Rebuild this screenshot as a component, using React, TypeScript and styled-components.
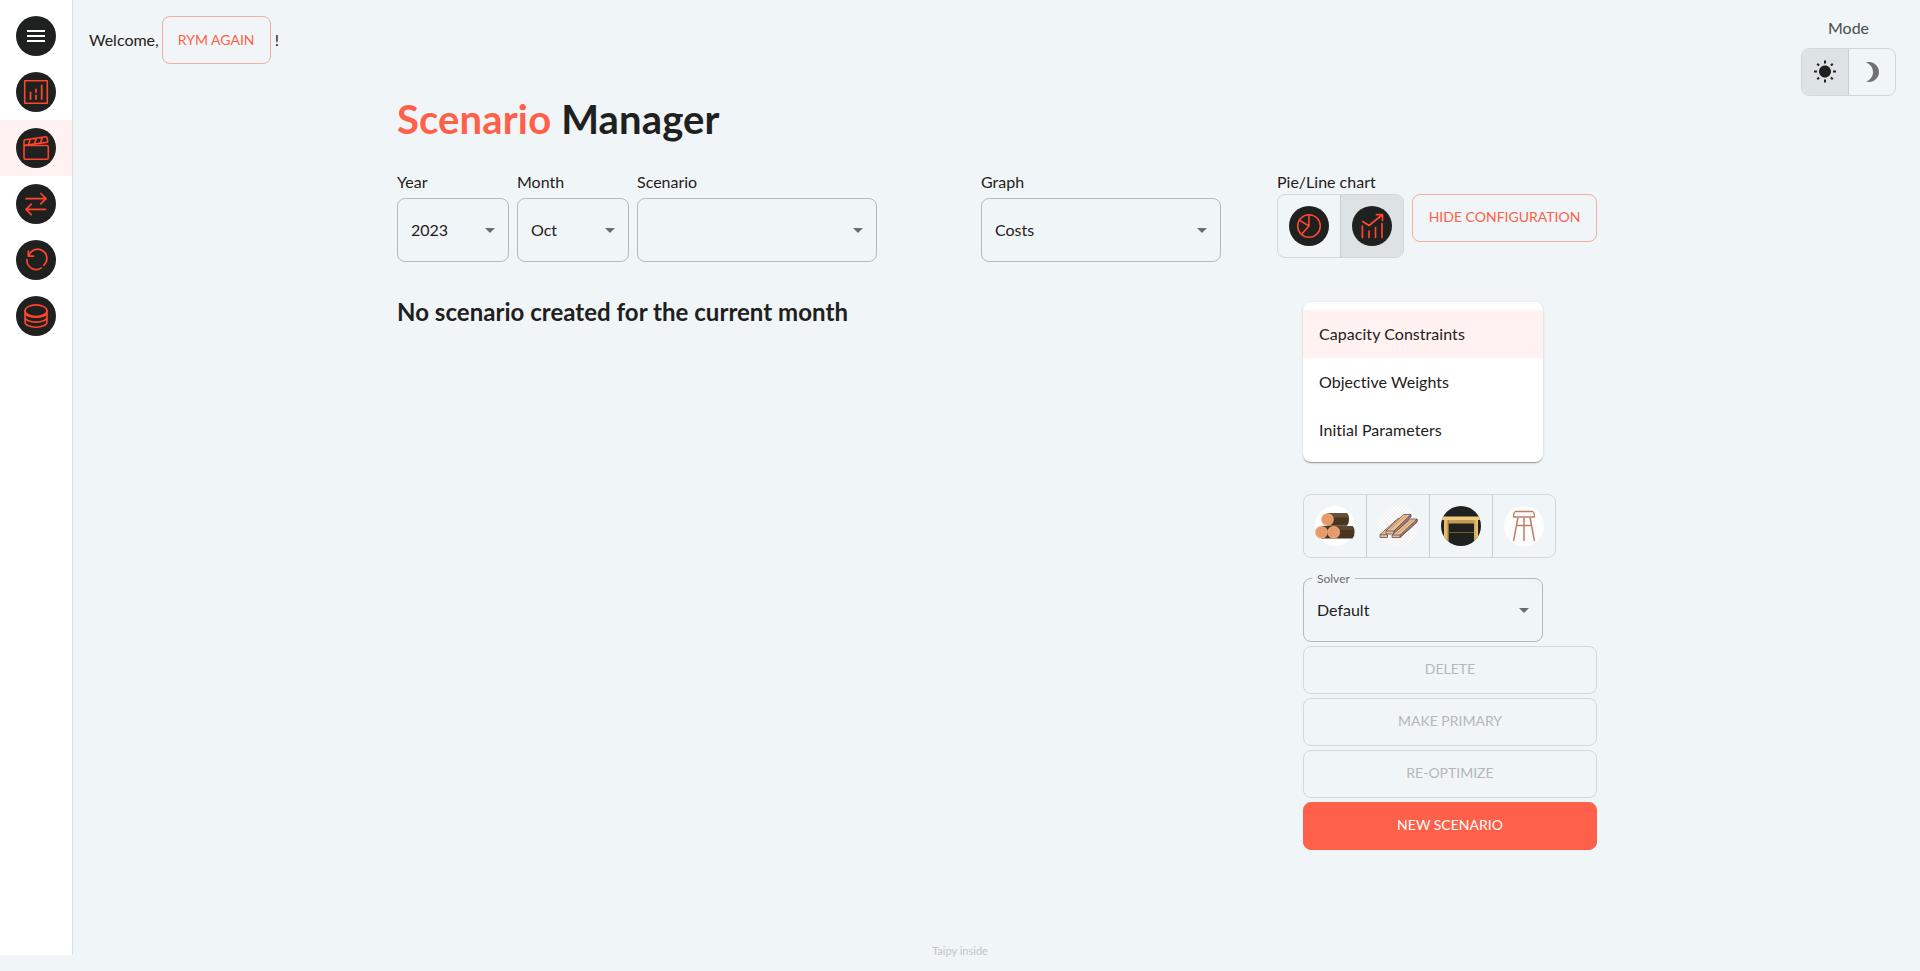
import React from "react";
import styled, { createGlobalStyle } from "styled-components";

const RED = "#ff6049";
const INK = "#1f2020";

const GlobalStyle = createGlobalStyle`
  *, *::before, *::after { box-sizing: border-box; }
  body {
    margin: 0;
    background: #f0f5f7;
    color: ${INK};
    font-family: Lato, "Liberation Sans", sans-serif;
    font-size: 16px;
    line-height: 24px;
    font-variant-ligatures: none;
  }
  button { font-family: inherit; }
  svg { display: block; flex: none; }
`;

const Shell = styled.div`
  display: flex;
  height: 971px;
  overflow: hidden;
`;

const Sidebar = styled.nav`
  width: 73px;
  height: 955px;
  flex: none;
  background: #fff;
  border-right: 1px solid #dbdfe1;
  padding-top: 8px;
`;

const SideItem = styled.div<{ $active?: boolean }>`
  height: 56px;
  display: flex;
  align-items: center;
  justify-content: center;
  background: ${(p) => (p.$active ? "#fff2f0" : "transparent")};
`;

const Page = styled.main`
  flex: 1;
  display: flex;
  flex-direction: column;
`;

const Header = styled.header`
  height: 96px;
  padding: 16px 24px 0 16px;
  display: flex;
  justify-content: space-between;
  align-items: flex-start;
`;

const Welcome = styled.div`
  display: flex;
  align-items: center;
  white-space: nowrap;
  button { margin: 0 4px 0 3px; padding-bottom: 0; }
`;

const ModeBox = styled.div`
  display: flex;
  flex-direction: column;
  align-items: center;
  gap: 8px;
  color: #4a4c4e;
`;

const Button = styled.button<{ $kind?: "outline" | "disabled" | "filled"; $width?: number }>`
  height: 48px;
  width: ${(p) => (p.$width ? `${p.$width}px` : "100%")};
  flex: none;
  padding: 0 0 2px;
  border-radius: 8px;
  font-size: 14px;
  line-height: 24px;
  text-align: center;
  white-space: nowrap;
  border: 1px solid
    ${(p) => (p.$kind === "disabled" ? "#d4d8da" : p.$kind === "filled" ? RED : "#f7aba2")};
  background: ${(p) => (p.$kind === "filled" ? RED : "transparent")};
  color: ${(p) => (p.$kind === "disabled" ? "#b4b8ba" : p.$kind === "filled" ? "#fff" : RED)};
`;

const ToggleGroup = styled.div`
  display: inline-flex;
  border: 1px solid #d3d7d9;
  border-radius: 8px;
  overflow: hidden;
`;

const Toggle = styled.div<{ $on?: boolean; $w: number; $h: number }>`
  width: ${(p) => p.$w}px;
  height: ${(p) => p.$h}px;
  display: flex;
  align-items: center;
  justify-content: center;
  background: ${(p) => (p.$on ? "#dde2e4" : "transparent")};
  & + & { border-left: 1px solid #c9cdcf; }
`;

const Content = styled.div`
  width: 1200px;
  margin-left: 324px;
`;

const Title = styled.h1`
  margin: 0;
  height: 74px;
  font-size: 40px;
  line-height: 47px;
  font-weight: 700;
  letter-spacing: 0.15px;
  white-space: nowrap;
  span { color: ${RED}; }
`;

const Filters = styled.div`
  display: flex;
  height: 92px;
`;

const Field = styled.div<{ $w: number; $after?: number }>`
  width: ${(p) => p.$w}px;
  flex: none;
  margin-right: ${(p) => p.$after ?? 8}px;
`;

const Label = styled.div<{ $h?: number }>`
  height: ${(p) => p.$h ?? 28}px;
  white-space: nowrap;
`;

const SelectBox = styled.div`
  position: relative;
  height: 64px;
  border: 1px solid #b5b9bb;
  border-radius: 8px;
  padding: 0 6px 0 13px;
  display: flex;
  align-items: center;
  justify-content: space-between;
`;

const Notch = styled.span`
  position: absolute;
  top: -10px;
  left: 8px;
  padding: 0 5px;
  background: #f0f5f7;
  color: #6b6e70;
  font-size: 12px;
  line-height: 20px;
`;

const Columns = styled.div`
  display: flex;
  justify-content: space-between;
  padding-top: 32px;
`;

const Message = styled.h3`
  margin: 3px 0 0;
  font-size: 24px;
  line-height: 29px;
  font-weight: 700;
  letter-spacing: 0.03px;
  white-space: nowrap;
`;

const Config = styled.section`
  width: 294px;
  padding-top: 8px;
  display: flex;
  flex-direction: column;
  align-items: flex-start;
`;

const List = styled.div`
  width: 240px;
  height: 160px;
  padding: 8px 0;
  background: #fff;
  border-radius: 8px;
  margin-bottom: 32px;
  box-shadow: 0 2px 1px -1px rgba(0, 0, 0, 0.2), 0 1px 1px rgba(0, 0, 0, 0.14),
    0 1px 3px rgba(0, 0, 0, 0.12);
`;

const ListItem = styled.div<{ $active?: boolean }>`
  height: 48px;
  padding: 12px 16px;
  letter-spacing: 0.05px;
  background: ${(p) => (p.$active ? "#fff2f0" : "transparent")};
`;

const Solver = styled.div`
  width: 240px;
  margin: 20px 0 4px;
`;

const Actions = styled.div`
  width: 100%;
  display: grid;
  gap: 4px;
`;

const Footer = styled.footer`
  margin: auto 73px 9px 0;
  font-size: 11px;
  line-height: 22px;
  text-align: center;
  color: #bfc5c6;
`;

const Disc = ({ children }: { children: React.ReactNode }) => (
  <svg width="40" height="40" viewBox="0 0 40 40" fill="none" stroke="#ff452b" strokeWidth="1.6" strokeLinecap="round" strokeLinejoin="round">
    <circle cx="20" cy="20" r="20" fill={INK} stroke="none" />
    {children}
  </svg>
);

const MenuIcon = () => (
  <Disc>
    <path d="M11 15h18M11 20h18M11 25h18" stroke="#fff" strokeWidth="2" strokeLinecap="butt" />
  </Disc>
);
const ChartIcon = () => (
  <Disc>
    <path d="M8.7 8.7h22.6v22.6H8.7z" />
    <path d="M14.5 20.5v6.5M20 17.5v2.500M20 23.5v3.500M25.7 13.5v13.500" strokeWidth="1.8" />
  </Disc>
);
const ClapIcon = () => (
  <Disc>
    <rect x="8" y="17.5" width="24.3" height="13.7" rx="1.5" />
    <path d="M8 17.5v-4.2q0-1.2 1.2-1.5l20.3-3q1.3-.2 1.5 1l.7 3.2q.2 1.2-1 1.4L8.5 17.3M12.2 17l2-5.8M18.2 16.2l2.3-5.9M24.2 15.4l2.3-6" />
  </Disc>
);
const SwapIcon = () => (
  <Disc>
    <path d="M10 14.7h20M24.8 9.5l5.2 5.2-5.2 5.2M29.6 25.4H10M15.2 20.2L10 25.4l5.2 5.2" strokeWidth="1.7" />
  </Disc>
);
const UndoIcon = () => (
  <Disc>
    <path d="M12.3 11.2v5h5.2M13 15.2A9.2 9.2 0 1 1 27.7 25.3M11 19.5A9.2 9.2 0 0 0 25.3 27.9" strokeWidth="1.7" />
  </Disc>
);
const DataIcon = () => (
  <Disc>
    <ellipse cx="20" cy="14.7" rx="11" ry="5.8" />
    <path d="M9 14.7v11c0 7.3 22 7.3 22 0v-11M9 16.5c0 6.2 22 6.2 22 0M9 21c0 6.8 22 6.8 22 0" />
  </Disc>
);
const PieIcon = () => (
  <Disc>
    <circle cx="20" cy="20" r="11.3" />
    <path d="M20 8.7V20l-7.5 8.4M20 20L10.3 14.1" />
  </Disc>
);
const GrowthIcon = () => (
  <Disc>
    <path d="M10.4 20v11.5M17 25v6.5M23.5 21.5v10M30 17.5v14M10.7 15.5l6.3 4L30 9M24.5 8.7h6v5.8" strokeWidth="1.7" />
  </Disc>
);

const Arrow = () => (
  <svg width="24" height="24" viewBox="0 0 24 24" fill="#6b6e70">
    <path d="M7 10l5 5 5-5z" />
  </svg>
);
const Sun = () => (
  <svg width="24" height="24" viewBox="0 0 24 24" fill={INK}>
    <path d="m6.76 4.84-1.8-1.79-1.41 1.41 1.79 1.79 1.42-1.41zM4 10.5H1v2h3v-2zm9-9.95h-2V3.5h2V.55zm7.45 3.91-1.41-1.41-1.79 1.79 1.41 1.41 1.79-1.79zm-3.21 13.7 1.79 1.8 1.41-1.41-1.8-1.79-1.4 1.4zM20 10.5v2h3v-2h-3zm-8-5c-3.31 0-6 2.69-6 6s2.69 6 6 6 6-2.69 6-6-2.69-6-6-6zm-1 16.95h2V19.5h-2v2.95zm-7.45-3.91 1.41 1.41 1.79-1.8-1.41-1.41-1.79 1.8z" />
  </svg>
);
const Moon = () => (
  <svg width="24" height="24" viewBox="0 0 24 24" fill="#6f7274">
    <path d="M9 2c-1.05 0-2.05.16-3 .46 4.06 1.27 7 5.06 7 9.54 0 4.48-2.94 8.27-7 9.54.95.3 1.95.46 3 .46 5.52 0 10-4.48 10-10S14.52 2 9 2z" />
  </svg>
);

const LogEnd = ({ x, y }: { x: number; y: number }) => (
  <g>
    <circle cx={x} cy={y} r="6.3" fill="#eba275" />
    <circle cx={x} cy={y} r="4" fill="none" stroke="#d98a5e" strokeWidth=".8" />
    <circle cx={x} cy={y} r="1.8" fill="none" stroke="#d98a5e" strokeWidth=".8" />
  </g>
);
const Logs = () => (
  <svg width="40" height="40" viewBox="0 0 40 40">
    <circle cx="20" cy="20" r="20" fill="#fff" />
    <path d="M12 7.2h20q2 2 2 6.3t-2 6.3H12z" fill="#493520" />
    <path d="M12 7.2h20q1.5 1.5 1.9 4.3H12z" fill="#665039" />
    <path d="M6 20.1h31.5q2 2 2 6.2t-2 6.3H6z" fill="#493520" />
    <path d="M18 20.1h19.5q1.5 1.5 1.9 4H18z" fill="#5d452c" />
    <LogEnd x={12.5} y={13.5} />
    <LogEnd x={6.5} y={26.3} />
    <LogEnd x={18.7} y={26.3} />
  </svg>
);
const Planks = () => (
  <svg width="40" height="40" viewBox="0 0 40 40" strokeLinejoin="round">
    <defs>
      <pattern id="weave" width="4" height="4" patternUnits="userSpaceOnUse">
        <path d="M0 0l4 4M4 0L0 4" stroke="#ececec" strokeWidth=".7" />
      </pattern>
    </defs>
    <circle cx="20" cy="20" r="20" fill="#fcfcfc" />
    <circle cx="20" cy="20" r="20" fill="url(#weave)" />
    <g stroke="#5b5264" strokeWidth=".8" fill="#efbd8e">
      <path d="M2 28.5L20 12.5h6.5L9.5 28.5V31.5H2z" />
      <path d="M8 25L25.5 8.5h7.500L16 25v3H8z" />
      <path d="M33 8.5v2.5L16 28v-3z" fill="#a97c68" />
      <path d="M14 29L32.5 13H39v3L22 31.5h-8z" />
      <path d="M39 13v3L22 31.5V29z" fill="#a97c68" />
      <path d="M14 29h8M2 28.7h7.5M8 25h8" fill="none" />
    </g>
    <path d="M12 23.5L28 9.5M19 27.5l16-13.5" stroke="#c98e62" strokeWidth=".8" />
  </svg>
);
const Table = () => (
  <svg width="40" height="40" viewBox="0 0 40 40">
    <defs>
      <clipPath id="disc"><circle cx="20" cy="20" r="20" /></clipPath>
    </defs>
    <g clipPath="url(#disc)">
      <path d="M0 0h40v40H0z" fill={INK} />
      <path d="M3 13h4.5v24H3zM33 13h4v24h-4z" fill="#e6c06f" />
      <path d="M6.3 14v22M34 14v22" stroke="#b98e43" strokeWidth=".8" />
      <path d="M7.5 14h25.5v3.5H7.5z" fill="#c89a58" />
      <path d="M0 10.5h40V14H0z" fill="#edcb7d" />
      <path d="M7.5 26.5h25.5" stroke="#75602f" strokeWidth="1" />
    </g>
  </svg>
);
const Stool = () => (
  <svg width="40" height="40" viewBox="0 0 40 40" fill="none" stroke="#bd7f64" strokeWidth="1.3" strokeLinejoin="round">
    <circle cx="20" cy="20" r="20" fill="#fdfdfd" stroke="none" />
    <path d="M11.5 5.5h17q2 1 2 5.5h-21q0-4.5 2-5.5zM9.5 11h21" />
    <path d="M14 11.5L9.5 35M26 11.5L30.5 35M20 11.5V35M13 19.5h14" strokeWidth="1.5" />
  </svg>
);

const Select = ({ value, label }: { value: string; label?: string }) => (
  <SelectBox>
    {label && <Notch>{label}</Notch>}
    <span>{value}</span>
    <Arrow />
  </SelectBox>
);

const sideIcons = [MenuIcon, ChartIcon, ClapIcon, SwapIcon, UndoIcon, DataIcon];
const products = [Logs, Planks, Table, Stool];

export default function App() {
  return (
    <>
      <GlobalStyle />
      <Shell>
        <Sidebar>
          {sideIcons.map((Icon, i) => (
            <SideItem key={i} $active={i === 2}>
              <Icon />
            </SideItem>
          ))}
        </Sidebar>
        <Page>
          <Header>
            <Welcome>
              <span>Welcome,</span>
              <Button $width={109}>RYM AGAIN</Button>
              <span>!</span>
            </Welcome>
            <ModeBox>
              <span>Mode</span>
              <ToggleGroup>
                <Toggle $w={46} $h={46} $on><Sun /></Toggle>
                <Toggle $w={47} $h={46}><Moon /></Toggle>
              </ToggleGroup>
            </ModeBox>
          </Header>
          <Content>
            <Title><span>Scenario</span> Manager</Title>
            <Filters>
              <Field $w={112}><Label>Year</Label><Select value="2023" /></Field>
              <Field $w={112}><Label>Month</Label><Select value="Oct" /></Field>
              <Field $w={240} $after={104}><Label>Scenario</Label><Select value="" /></Field>
              <Field $w={240} $after={56}><Label>Graph</Label><Select value="Costs" /></Field>
              <Field $w={127}>
                <Label $h={24}>Pie/Line chart</Label>
                <ToggleGroup>
                  <Toggle $w={62} $h={62}><PieIcon /></Toggle>
                  <Toggle $w={63} $h={62} $on><GrowthIcon /></Toggle>
                </ToggleGroup>
              </Field>
              <Field $w={185} $after={0}>
                <Label $h={24} />
                <Button $width={185}>HIDE CONFIGURATION</Button>
              </Field>
            </Filters>
            <Columns>
              <Message>No scenario created for the current month</Message>
              <Config>
                <List>
                  <ListItem $active>Capacity Constraints</ListItem>
                  <ListItem>Objective Weights</ListItem>
                  <ListItem>Initial Parameters</ListItem>
                </List>
                <ToggleGroup>
                  {products.map((Icon, i) => (
                    <Toggle key={i} $w={i ? 63 : 62} $h={62}><Icon /></Toggle>
                  ))}
                </ToggleGroup>
                <Solver><Select label="Solver" value="Default" /></Solver>
                <Actions>
                  <Button $kind="disabled">DELETE</Button>
                  <Button $kind="disabled">MAKE PRIMARY</Button>
                  <Button $kind="disabled">RE-OPTIMIZE</Button>
                  <Button $kind="filled">NEW SCENARIO</Button>
                </Actions>
              </Config>
            </Columns>
          </Content>
          <Footer>Taipy inside</Footer>
        </Page>
      </Shell>
    </>
  );
}
